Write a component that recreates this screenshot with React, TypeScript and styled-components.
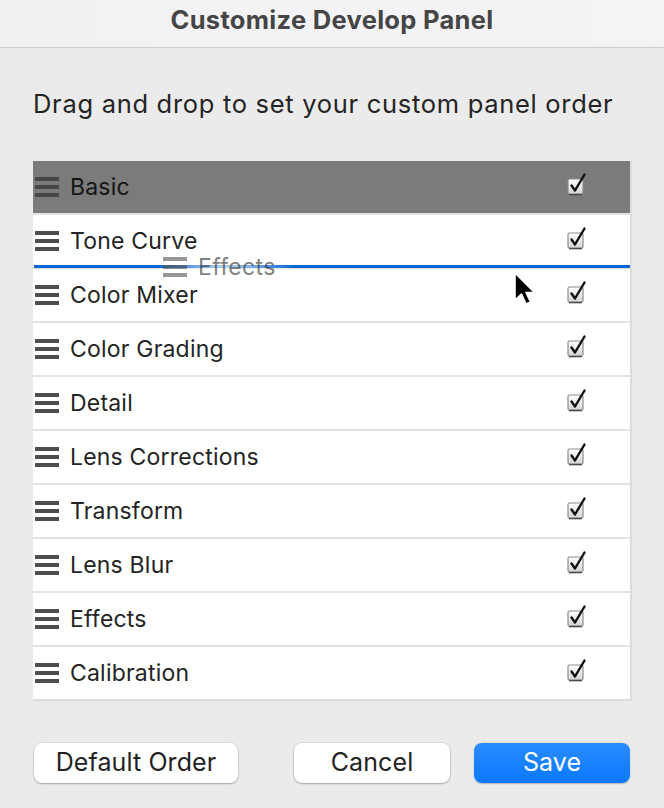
import React from 'react';
import styled, { createGlobalStyle } from 'styled-components';

const GlobalStyle = createGlobalStyle`
    html, body {
        margin: 0;
        padding: 0;
        background: #ebebeb;
    }
    body {
        font-family: Inter, "Noto Sans", "Liberation Sans", sans-serif;
        -webkit-font-smoothing: antialiased;
    }
`;

const Window = styled.div`
    width: 664px;
    height: 808px;
    background: #ebebeb;
    overflow: hidden;
    position: relative;
`;

const TitleBar = styled.div`
    height: 48px;
    display: flex;
    align-items: center;
    justify-content: center;
    background: linear-gradient(90deg, #f1f1f3 0%, #f3f3f5 45%, #f4f4f6 100%);
    border-bottom: 1px solid #cdcdcf;
    box-sizing: border-box;
`;

const Title = styled.div`
    font-size: 25.5px;
    font-weight: 700;
    color: #454545;
    letter-spacing: 0.3px;
    margin-top: -9px;
`;

const Content = styled.div`
    padding: 0 32px 0 33px;
`;

const Instruction = styled.div`
    margin-top: 40px;
    font-size: 25.5px;
    line-height: 32px;
    color: #242424;
    letter-spacing: 0.7px;
`;

const List = styled.div`
    position: relative;
    margin-top: 41px;
    width: 599px;
    background: #e3e3e3;
    border-right: 2px solid #dcdcdc;
    border-bottom: 2px solid #dcdcdc;
    box-sizing: border-box;
    display: flex;
    flex-direction: column;
    gap: 2px;
`;

const Row = styled.div<{ $selected?: boolean }>`
    height: 52px;
    display: flex;
    align-items: center;
    padding-left: 2px;
    background: ${(p) => (p.$selected ? '#7b7b7b' : '#ffffff')};
    color: ${(p) => (p.$selected ? '#151515' : '#242424')};
    font-size: 23px;
`;

const Grip = styled.div<{ $color?: string }>`
    width: 24px;
    height: 20px;
    display: flex;
    flex-direction: column;
    justify-content: space-between;
    margin-right: 11px;
    span {
        display: block;
        height: 4px;
        background: ${(p) => p.$color || '#4f4f4f'};
    }
`;

const Label = styled.div`
    flex: 1;
    letter-spacing: 0.2px;
`;

const CheckWrap = styled.div`
    width: 24px;
    height: 26px;
    margin-right: 41px;
    margin-top: -6px;
`;

const DropLine = styled.div`
    position: absolute;
    left: 1px;
    right: 0;
    top: 104px;
    height: 3px;
    background: #0b63d3;
`;

const Ghost = styled.div`
    position: absolute;
    left: 124px;
    top: 88px;
    display: flex;
    align-items: center;
    padding: 4px 20px 4px 6px;
    color: rgba(40, 40, 40, 0.6);
    font-size: 23px;
    letter-spacing: 0.35px;
    border-radius: 30px;
    background: radial-gradient(ellipse at center, rgba(255, 255, 255, 0.75) 0%, rgba(255, 255, 255, 0) 70%);
`;

const Cursor = styled.svg`
    position: absolute;
    left: 479px;
    top: 110px;
`;

const Footer = styled.div`
    display: flex;
    align-items: center;
    margin-top: 42px;
    padding-left: 1px;
`;

const Button = styled.button<{ $primary?: boolean; $width: number }>`
    width: ${(p) => p.$width}px;
    height: 40px;
    border: none;
    border-radius: 8px;
    font-family: inherit;
    font-size: 25px;
    letter-spacing: 0.1px;
    color: ${(p) => (p.$primary ? '#ffffff' : '#232323')};
    background: ${(p) =>
        p.$primary ? 'linear-gradient(180deg, #2a8cff 0%, #0a78ff 100%)' : '#ffffff'};
    box-shadow: ${(p) =>
        p.$primary
            ? '0 0.5px 1.5px rgba(0,0,0,0.25)'
            : '0 0 0 0.5px rgba(0,0,0,0.12), 0 1px 2px rgba(0,0,0,0.25)'};
    padding: 0;
    padding-bottom: 2px;
`;

const Spacer = styled.div<{ $w: number }>`
    width: ${(p) => p.$w}px;
`;

const Checkbox = () => (
    <svg width="24" height="26" viewBox="0 0 24 26">
        <defs>
            <linearGradient id="cbg" x1="0" y1="0" x2="0" y2="1">
                <stop offset="0" stopColor="#ffffff" />
                <stop offset="1" stopColor="#d4d4d4" />
            </linearGradient>
        </defs>
        <rect x="3" y="8" width="15" height="15" rx="1.5" fill="url(#cbg)" stroke="#8c8c8c" strokeWidth="1.2" />
        <line x1="4" y1="23.6" x2="17" y2="23.6" stroke="#4a4a4a" strokeWidth="1.4" />
        <path d="M6.5 14.5 L10 19.5 L19.5 3.5" fill="none" stroke="#111" strokeWidth="2.4" strokeLinecap="round" strokeLinejoin="round" />
    </svg>
);

const panels = [
    'Basic',
    'Tone Curve',
    'Color Mixer',
    'Color Grading',
    'Detail',
    'Lens Corrections',
    'Transform',
    'Lens Blur',
    'Effects',
    'Calibration',
];

export default function App() {
    return (
        <>
            <GlobalStyle />
            <Window>
                <TitleBar>
                    <Title>Customize Develop Panel</Title>
                </TitleBar>
                <Content>
                    <Instruction>Drag and drop to set your custom panel order</Instruction>
                    <List>
                        {panels.map((name, i) => (
                            <Row key={name} $selected={i === 0}>
                                <Grip $color={i === 0 ? '#474747' : '#4f4f4f'}>
                                    <span />
                                    <span />
                                    <span />
                                </Grip>
                                <Label>{name}</Label>
                                <CheckWrap>
                                    <Checkbox />
                                </CheckWrap>
                            </Row>
                        ))}
                        <DropLine />
                        <Ghost>
                            <Grip $color="rgba(80,80,80,0.6)">
                                <span />
                                <span />
                                <span />
                            </Grip>
                            Effects
                        </Ghost>
                        <Cursor width="30" height="40" viewBox="0 0 30 40">
                            <path
                                d="M3 2 L3 29 L9.5 23 L14 33 L18.5 31 L14 21.5 L22.5 21.5 Z"
                                fill="#000"
                                stroke="#fff"
                                strokeWidth="1.6"
                                strokeLinejoin="round"
                            />
                        </Cursor>
                    </List>
                    <Footer>
                        <Button $width={204}>Default Order</Button>
                        <Spacer $w={56} />
                        <Button $width={156}>Cancel</Button>
                        <Spacer $w={24} />
                        <Button $primary $width={156}>
                            Save
                        </Button>
                    </Footer>
                </Content>
            </Window>
        </>
    );
}
